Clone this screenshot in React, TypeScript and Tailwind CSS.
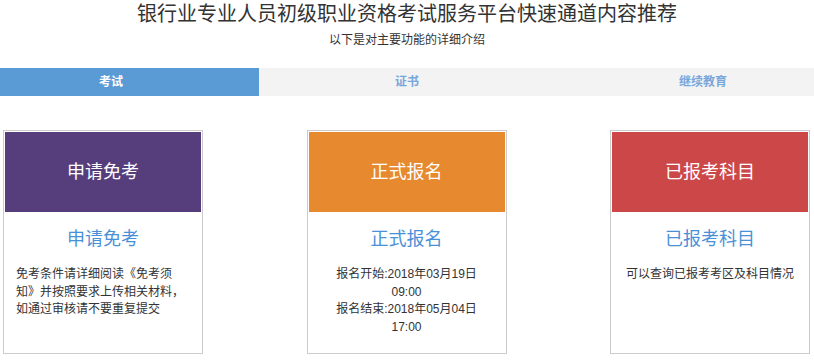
const font = { fontFamily: '"Liberation Sans", "Noto Sans CJK SC", sans-serif' };

const tabs = ['考试', '证书', '继续教育'];

const cards = [
    {
        title: '申请免考',
        bg: 'bg-[#563d7c]',
        align: 'text-left',
        body: <>免考条件请详细阅读《免考须知》并按照要求上传相关材料，如通过审核请不要重复提交</>,
    },
    {
        title: '正式报名',
        bg: 'bg-[#e6892f]',
        align: 'text-center',
        body: <>报名开始:2018年03月19日<br />09:00<br />报名结束:2018年05月04日<br />17:00</>,
    },
    {
        title: '已报考科目',
        bg: 'bg-[#cc4848]',
        align: 'text-center',
        body: <>可以查询已报考考区及科目情况</>,
    },
];

const App = () => {
    return (
        <div className="w-[814px] h-[362px] overflow-hidden bg-white" style={font}>
            <div className="flex flex-col items-center pt-[1px]">
                <h1 className="text-[20px] leading-[26px] text-[#333]">银行业专业人员初级职业资格考试服务平台快速通道内容推荐</h1>
                <p className="text-[12px] leading-[16px] mt-[5px] text-[#333]">以下是对主要功能的详细介绍</p>
            </div>
            <div className="flex justify-center mt-[20px]">
                <div className="flex shrink-0 w-[888px] bg-[#f3f3f3]">
                    {tabs.map((t, i) => (
                        <div
                            key={t}
                            className={`w-[296px] h-[28px] flex items-center justify-center text-[12px] font-bold ${i === 0 ? 'bg-[#5b9bd5] text-white' : 'text-[#79a7dc]'}`}
                        >
                            {t}
                        </div>
                    ))}
                </div>
            </div>
            <div className="flex gap-[103.5px] pl-[3px] mt-[34px]">
                {cards.map((c) => (
                    <div key={c.title} className="w-[200px] h-[224px] border border-[#cccccc] p-px">
                        <div className={`${c.bg} h-[80px] flex items-center justify-center text-white text-[18px]`}>
                            {c.title}
                        </div>
                        <div className="text-center text-[#4a90d9] text-[18px] leading-[24px] mt-[15px]">{c.title}</div>
                        <div className={`${c.align} text-[12px] leading-[17.5px] text-[#333] px-[11px] mt-[15px]`}>
                            {c.body}
                        </div>
                    </div>
                ))}
            </div>
        </div>
    );
};

export default App;
